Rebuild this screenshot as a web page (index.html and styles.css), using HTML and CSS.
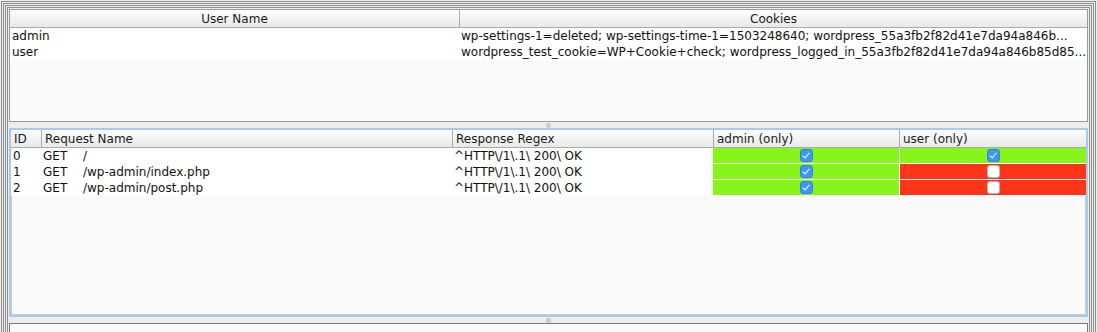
FILE: index.html
```html
<!DOCTYPE html>
<html lang="en">
<head>
  <meta charset="UTF-8" />
  <title>Authorization Matrix</title>
  <link rel="stylesheet" href="styles.css">
</head>
<body>
  <div class="ring">
    <div class="ring">
      <div class="ring">
        <div class="ring">
          <div class="split">

            <!-- users / cookies -->
            <div class="pane users">
              <table class="grid">
                <colgroup><col style="width:449px"><col></colgroup>
                <thead>
                  <tr><th class="center">User Name</th><th class="center">Cookies</th></tr>
                </thead>
                <tbody>
                  <tr><td>admin</td><td class="clip">wp-settings-1=deleted; wp-settings-time-1=1503248640; wordpress_55a3fb2f82d41e7da94a846b...</td></tr>
                  <tr><td>user</td><td class="clip">wordpress_test_cookie=WP+Cookie+check; wordpress_logged_in_55a3fb2f82d41e7da94a846b85d85...</td></tr>
                </tbody>
              </table>
            </div>

            <div class="divider"><span class="knob"></span></div>

            <!-- requests -->
            <div class="pane requests focused">
              <table class="grid">
                <colgroup>
                  <col style="width:30px"><col style="width:411px"><col style="width:261px"><col style="width:186px"><col>
                </colgroup>
                <thead>
                  <tr><th>ID</th><th>Request Name</th><th>Response Regex</th><th>admin (only)</th><th>user (only)</th></tr>
                </thead>
                <tbody>
                  <tr>
                    <td>0</td><td><span class="verb">GET</span>/</td><td>^HTTP\/1\.1\ 200\ OK</td>
                    <td class="pass"><span class="check on"></span></td>
                    <td class="pass"><span class="check on"></span></td>
                  </tr>
                  <tr>
                    <td>1</td><td><span class="verb">GET</span>/wp-admin/index.php</td><td>^HTTP\/1\.1\ 200\ OK</td>
                    <td class="pass"><span class="check on"></span></td>
                    <td class="fail"><span class="check"></span></td>
                  </tr>
                  <tr>
                    <td>2</td><td><span class="verb">GET</span>/wp-admin/post.php</td><td>^HTTP\/1\.1\ 200\ OK</td>
                    <td class="pass"><span class="check on"></span></td>
                    <td class="fail"><span class="check"></span></td>
                  </tr>
                </tbody>
              </table>
            </div>

            <div class="divider"><span class="knob"></span></div>

            <div class="pane bottom"></div>

          </div>
        </div>
      </div>
    </div>
  </div>
</body>
</html>
```

FILE: styles.css
```css
:root {
  --ring: #8e8e8e;
  --panel: #fafafa;
  --head-line: #ababab;
  --focus: #a6cbef;
  --pass: #88f51a;
  --fail: #ff3419;
  --tick: #3d97f8;
}

body {
  margin: 0;
  padding: 1px;
  height: 332px;
  overflow: hidden;
  box-sizing: border-box;
  background: #ededed;
  font-family: 'DejaVu Sans', sans-serif;
  font-size: 12px;
  color: #111;
}

.ring {
  border: 1px solid var(--ring);
  padding: 1px;
  background: #ededed;
}

.split {
  display: flex;
  flex-direction: column;
  height: 420px;
}

.pane {
  background: var(--panel);
  border: 1px solid #9a9a9a;
  overflow: hidden;
}

.users {
  height: 111px;
}

.requests {
  height: 185px;
  border: 2px solid var(--focus);
  box-shadow: inset 0 0 0 1px #c9c9c9;
}

.bottom {
  flex: 1;
  border-color: #7a7a7a;
  border-width: 1px 1px 0;
}

.divider {
  height: 6px;
  display: flex;
  justify-content: center;
  align-items: center;
}

.knob {
  width: 5px;
  height: 5px;
  border-radius: 50%;
  background: #d0d0d0;
  border: 1px solid #c2c2c2;
  box-sizing: border-box;
}

.grid {
  width: 100%;
  table-layout: fixed;
  border-collapse: separate;
  border-spacing: 0;
}

.grid th {
  height: 16px;
  padding: 1px 3px 0;
  font-weight: normal;
  text-align: left;
  color: #1a1a1a;
  background: linear-gradient(#fdfdfd, #e9e9e9);
  border-bottom: 1px solid var(--head-line);
  border-left: 1px solid var(--head-line);
  white-space: nowrap;
}

.grid th:first-child {
  border-left: none;
}

.grid th.center {
  text-align: center;
}

.grid td {
  height: 14px;
  padding: 1px 2px 0;
  background: #fff;
  border-bottom: 1px solid #fff;
  white-space: nowrap;
  line-height: 14px;
}

.clip {
  overflow: hidden;
}

.verb {
  display: inline-block;
  width: 40px;
}

.requests td.pass,
.requests td.fail {
  text-align: center;
  padding: 0;
  border-left: 1px solid #fff;
}

.requests td:nth-child(4) {
  border-left: none;
}

td.pass { background: var(--pass); }
td.fail { background: var(--fail); }

.check {
  display: inline-block;
  width: 13px;
  height: 13px;
  box-sizing: border-box;
  border-radius: 3px;
  background: #fff;
  border: 1px solid #b5b5b5;
  vertical-align: middle;
  position: relative;
  top: -1px;
}

.check.on {
  background: var(--tick);
  border-color: #2f86e6;
}

.check.on::after {
  content: '';
  position: absolute;
  left: 3px;
  top: 1px;
  width: 3px;
  height: 6px;
  border: solid #fff;
  border-width: 0 1.5px 1.5px 0;
  transform: rotate(40deg);
}
```
